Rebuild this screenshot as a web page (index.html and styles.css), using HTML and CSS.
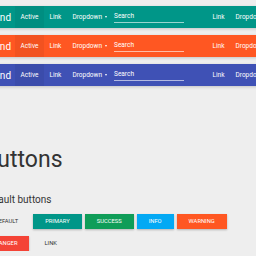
FILE: index.html
```html
<!DOCTYPE html>
<html lang="en">
<head>
    <meta charset="UTF-8">
    <meta name="viewport" content="width=device-width, initial-scale=1.0">
    <title>Material Buttons</title>
    <link rel="stylesheet" href="styles.css">
</head>
<body>
    <div class="page">
        <nav class="navbar navbar-primary">
            <span class="brand">Brand</span>
            <a class="nav-link active">Active</a>
            <a class="nav-link">Link</a>
            <a class="nav-link">Dropdown <span class="caret"></span></a>
            <div class="search"><span>Search</span></div>
            <a class="nav-link">Link</a>
            <a class="nav-link">Dropdown <span class="caret"></span></a>
        </nav>
        <nav class="navbar navbar-warning">
            <span class="brand">Brand</span>
            <a class="nav-link active">Active</a>
            <a class="nav-link">Link</a>
            <a class="nav-link">Dropdown <span class="caret"></span></a>
            <div class="search"><span>Search</span></div>
            <a class="nav-link">Link</a>
            <a class="nav-link">Dropdown <span class="caret"></span></a>
        </nav>
        <nav class="navbar navbar-indigo">
            <span class="brand">Brand</span>
            <a class="nav-link active">Active</a>
            <a class="nav-link">Link</a>
            <a class="nav-link">Dropdown <span class="caret"></span></a>
            <div class="search"><span>Search</span></div>
            <a class="nav-link">Link</a>
            <a class="nav-link">Dropdown <span class="caret"></span></a>
        </nav>

        <h1>Buttons</h1>
        <h3>Default buttons</h3>

        <div class="btn-row">
            <span class="btn btn-flat">Default</span>
            <span class="btn btn-primary">Primary</span>
            <span class="btn btn-success">Success</span>
            <span class="btn btn-info">Info</span>
            <span class="btn btn-warning">Warning</span>
        </div>
        <div class="btn-row">
            <span class="btn btn-danger">Danger</span>
            <span class="btn btn-flat">Link</span>
        </div>
    </div>
</body>
</html>
```

FILE: styles.css
```css
html, body {
    margin: 0;
    background: #eeeeee;
    overflow: hidden;
    font-family: Roboto, "Liberation Sans", sans-serif;
}
.page {
    margin-left: -17px;
    width: 320px;
    padding-top: 6px;
}
.navbar {
    display: flex;
    align-items: center;
    height: 22px;
    margin-bottom: 7px;
    padding-left: 2px;
    color: #fff;
    box-shadow: 0 1px 3px rgba(0, 0, 0, 0.18);
}
.navbar-primary { background: #009688; }
.navbar-warning { background: #ff5722; }
.navbar-indigo { background: #3f51b5; }
.brand {
    font-size: 10px;
    padding-right: 4px;
}
.nav-link {
    display: flex;
    align-items: center;
    height: 100%;
    padding: 0 5.5px;
    font-size: 6.5px;
}
.nav-link.active {
    background: rgba(0, 0, 0, 0.05);
}
.caret {
    margin-left: 2.5px;
    border-left: 1.5px solid transparent;
    border-right: 1.5px solid transparent;
    border-top: 2px solid #fff;
}
.search {
    width: 70px;
    margin: 0 23px 0 2px;
    padding-bottom: 2px;
    border-bottom: 1px solid rgba(255, 255, 255, 0.6);
    font-size: 6.5px;
}
h1 {
    margin: 60px 0 0;
    font-size: 23px;
    font-weight: 400;
    line-height: 28px;
    color: #333;
}
h3 {
    margin: 20px 0 0;
    font-size: 10px;
    font-weight: 400;
    line-height: 12px;
    color: #333;
}
.btn-row {
    display: flex;
    gap: 3px;
    margin-top: 7px;
}
.btn-row:first-of-type {
    margin-top: 8px;
}
.btn {
    height: 15px;
    line-height: 15px;
    padding: 0 12px;
    font-size: 5.8px;
    text-transform: uppercase;
    color: #fff;
    box-shadow: 0 1px 2px rgba(0, 0, 0, 0.25);
}
.btn-flat {
    color: #333;
    box-shadow: none;
}
.btn-primary { background: #009688; }
.btn-success { background: #0f9d58; }
.btn-info { background: #03a9f4; }
.btn-warning { background: #ff5722; }
.btn-danger { background: #f44336; }
```
